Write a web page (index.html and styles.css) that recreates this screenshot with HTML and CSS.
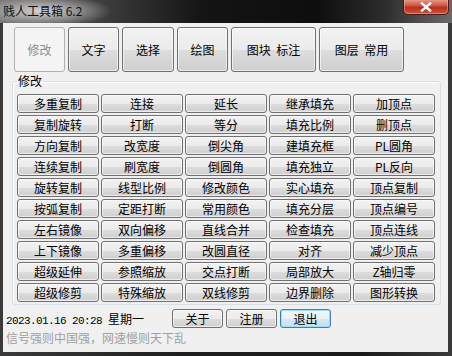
FILE: index.html
```html
<!DOCTYPE html>
<html lang="zh">
<head>
<meta charset="utf-8">
<title>贱人工具箱 6.2</title>
<link rel="stylesheet" href="styles.css">
</head>
<body>
<div class="window">
  <div class="titlebar">
    <span class="title">贱人工具箱 6.2</span>
    <div class="close">
      <svg width="14" height="10" viewBox="0 0 14 10"><path d="M3 1.5 L11 8.5 M11 1.5 L3 8.5" stroke="#fff" stroke-width="2.4" stroke-linecap="square"/></svg>
    </div>
  </div>
  <div class="client">
    <div class="tabs">
      <button class="btn tab disabled w1">修改</button>
      <button class="btn tab w1">文字</button>
      <button class="btn tab w2">选择</button>
      <button class="btn tab w1">绘图</button>
      <button class="btn tab w3">图块&nbsp;&nbsp;标注</button>
      <button class="btn tab w3">图层&nbsp;&nbsp;常用</button>
    </div>
    <fieldset class="group">
      <legend>修改</legend>
      <div class="grid">
        <button class="btn cmd">多重复制</button><button class="btn cmd">连接</button><button class="btn cmd">延长</button><button class="btn cmd">继承填充</button><button class="btn cmd">加顶点</button>
        <button class="btn cmd">复制旋转</button><button class="btn cmd">打断</button><button class="btn cmd">等分</button><button class="btn cmd">填充比例</button><button class="btn cmd">删顶点</button>
        <button class="btn cmd">方向复制</button><button class="btn cmd">改宽度</button><button class="btn cmd">倒尖角</button><button class="btn cmd">建填充框</button><button class="btn cmd">PL圆角</button>
        <button class="btn cmd">连续复制</button><button class="btn cmd">刷宽度</button><button class="btn cmd">倒圆角</button><button class="btn cmd">填充独立</button><button class="btn cmd">PL反向</button>
        <button class="btn cmd">旋转复制</button><button class="btn cmd">线型比例</button><button class="btn cmd">修改颜色</button><button class="btn cmd">实心填充</button><button class="btn cmd">顶点复制</button>
        <button class="btn cmd">按弧复制</button><button class="btn cmd">定距打断</button><button class="btn cmd">常用颜色</button><button class="btn cmd">填充分层</button><button class="btn cmd">顶点编号</button>
        <button class="btn cmd">左右镜像</button><button class="btn cmd">双向偏移</button><button class="btn cmd">直线合并</button><button class="btn cmd">检查填充</button><button class="btn cmd">顶点连线</button>
        <button class="btn cmd">上下镜像</button><button class="btn cmd">多重偏移</button><button class="btn cmd">改圆直径</button><button class="btn cmd">对齐</button><button class="btn cmd">减少顶点</button>
        <button class="btn cmd">超级延伸</button><button class="btn cmd">参照缩放</button><button class="btn cmd">交点打断</button><button class="btn cmd">局部放大</button><button class="btn cmd">Z轴归零</button>
        <button class="btn cmd">超级修剪</button><button class="btn cmd">特殊缩放</button><button class="btn cmd">双线修剪</button><button class="btn cmd">边界删除</button><button class="btn cmd">图形转换</button>
      </div>
    </fieldset>
    <div class="status">
      <span class="date">2023.01.16 20:28 <span class="week">星期一</span></span>
      <div class="actions">
        <button class="btn small">关于</button>
        <button class="btn small">注册</button>
        <button class="btn small default">退出</button>
      </div>
    </div>
    <div class="motto">信号强则中国强，网速慢则天下乱</div>
  </div>
</div>
</body>
</html>
```

FILE: styles.css
```css
* { box-sizing: border-box; }
html, body { margin: 0; padding: 0; }
body {
  width: 452px;
  height: 356px;
  overflow: hidden;
  background: #1b1b1b;
  font-family: "Noto Sans CJK SC", "Noto Sans", sans-serif;
  font-size: 12px;
  color: #000;
}
.window {
  width: 452px;
  height: 356px;
  display: flex;
  flex-direction: column;
  background: linear-gradient(90deg, #3a3a3a 0%, #1e1e1e 40%, #1a1a1a 80%, #3a3a3a 100%);
}
.titlebar {
  flex: none;
  height: 23px;
  display: flex;
  align-items: flex-start;
  justify-content: space-between;
  background:
    radial-gradient(ellipse 70px 16px at 42px 11px, rgba(235,235,235,0.85) 0%, rgba(200,200,200,0.5) 55%, rgba(200,200,200,0) 100%),
    linear-gradient(90deg, #6e6e6e 0%, #333 28%, #141414 45%, #0e0e0e 70%, #2c2c2c 85%, #6a6a6a 100%);
}
.title {
  padding: 3px 0 0 3px;
  line-height: 16px;
  font-size: 12px;
  color: #111;
}
.close {
  width: 46px;
  height: 16px;
  margin: -1px 3px 0 0;
  display: flex;
  align-items: center;
  justify-content: center;
  border: 1px solid #4a1a14;
  border-top: none;
  border-radius: 0 0 5px 5px;
  background: linear-gradient(#e8a293 0%, #d0533f 45%, #b8301d 55%, #c8543c 100%);
  box-shadow: inset 0 0 0 1px rgba(255,200,190,0.45);
}
.client {
  flex: 1;
  margin: 0 4px 4px 3px;
  background: #f0f0f0;
  display: flex;
  flex-direction: column;
}
.btn {
  font: inherit;
  color: #000;
  padding: 0;
  border: 1px solid #707070;
  border-radius: 3px;
  background: linear-gradient(#f2f2f2 0%, #ebebeb 50%, #dddddd 51%, #cfcfcf 100%);
  box-shadow: inset 0 0 0 1px rgba(255,255,255,0.6);
  display: flex;
  align-items: center;
  justify-content: center;
  white-space: nowrap;
}
.tabs {
  display: flex;
  gap: 3px;
  margin-top: 4px;
  padding-left: 11px;
  height: 45px;
}
.tab { height: 45px; }
.w1 { width: 51px; }
.w2 { width: 52px; }
.w3 { width: 85px; }
.tab.disabled {
  border-color: #adb2b5;
  background: #f4f4f4;
  box-shadow: none;
  color: #8d8d8d;
}
.group {
  margin: 2px 0 0 9px;
  width: 429px;
  padding: 6px 5px 2px 4px;
  border: 1px solid #d5dfe5;
  border-radius: 3px;
  box-shadow: inset 1px 1px 0 #fff;
}
.group legend {
  padding: 0 1px;
  line-height: 14px;
  font-size: 12px;
}
.grid {
  display: grid;
  grid-template-columns: repeat(5, 82px);
  grid-auto-rows: 19px;
  gap: 2px;
}
.cmd { height: 19px; line-height: 17px; }
.status {
  display: flex;
  align-items: center;
  margin-top: 4px;
  padding-left: 3px;
  height: 19px;
}
.date {
  width: 166px;
  font-family: "Liberation Mono", "DejaVu Sans Mono", monospace;
  font-size: 11px;
  letter-spacing: -0.6px;
}
.week {
  font-family: "Noto Sans CJK SC", sans-serif;
  font-size: 12px;
  letter-spacing: 0;
}
.actions {
  display: flex;
  gap: 3px;
}
.small { width: 51px; height: 19px; }
.default {
  border-color: #3c7fb1;
  box-shadow: inset 0 0 0 1px #9fdcf7;
  background: linear-gradient(#f2f8fc 0%, #e6f2fa 50%, #d6e9f5 51%, #c7dfef 100%);
}
.motto {
  margin-top: 3px;
  padding-left: 3px;
  line-height: 14px;
  color: #a0a0a0;
}
```
